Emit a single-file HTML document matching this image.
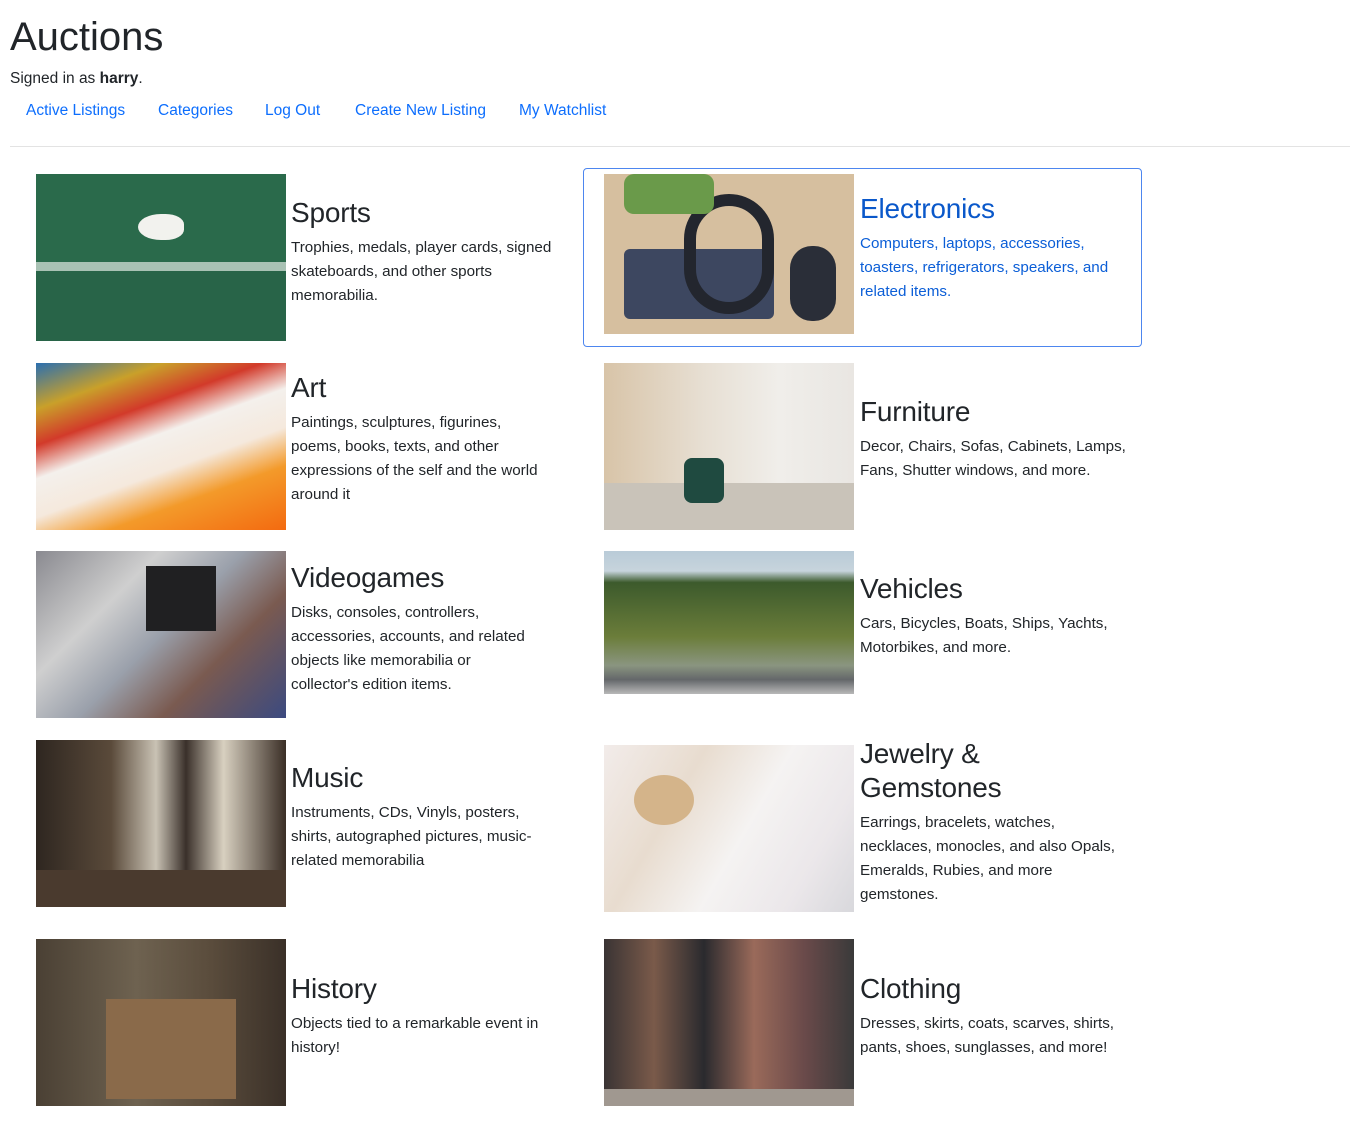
<!DOCTYPE html>
<html><head><meta charset="utf-8"><style>
*{box-sizing:border-box}
body{margin:0;background:#fff;font-family:"Liberation Sans",sans-serif;color:#212529;width:1360px;height:1127px;position:relative;overflow:hidden}
.a{position:absolute}
h1{position:absolute;left:10px;top:13px;margin:0;font-size:40px;font-weight:500;line-height:48px}
.sig{left:10px;top:69px;font-size:15.5px;line-height:20px}
.nav a{position:absolute;top:101px;color:#0d6efd;text-decoration:none;font-size:15.5px;line-height:20px}
hr{position:absolute;left:10px;top:146px;width:1340px;margin:0;border:0;border-top:1px solid #e3e3e3}
.img{position:absolute;width:250px;height:167px}
.t{position:absolute;width:300px}
.t h3{margin:0 0 6px;font-size:28px;font-weight:500;line-height:34px;letter-spacing:-0.2px}
.t p{margin:0;font-size:15.2px;line-height:24px;white-space:nowrap}
.box{left:583px;top:168px;width:559px;height:179px;border:1px solid #4d86ef;border-radius:4px}
.blue h3,.blue p{color:#0b5ed7}
.blue h3{color:#0a58ca}
</style></head><body>
<h1>Auctions</h1>
<div class="a sig">Signed in as <b>harry</b>.</div>
<div class="nav"><a style="left:26px">Active Listings</a><a style="left:158px">Categories</a><a style="left:265px">Log Out</a><a style="left:355px">Create New Listing</a><a style="left:519px">My Watchlist</a></div>
<hr>
<div class="a box"></div>

<div class="img" style="left:36px;top:174px;background:linear-gradient(#2a6a4b 0,#2a6a4b 88px,#a9c2b4 88px,#a9c2b4 97px,#286448 97px)"><div class="a" style="left:102px;top:40px;width:46px;height:26px;background:#f2f2ee;border-radius:50% 40% 40% 50%"></div></div>
<div class="t" style="left:291px;top:196px"><h3>Sports</h3><p>Trophies, medals, player cards, signed<br>skateboards, and other sports<br>memorabilia.</p></div>

<div class="img" style="left:604px;top:174px;height:160px;background:#d6bf9f"><div class="a" style="left:20px;top:75px;width:150px;height:70px;background:#3d4760;border-radius:6px"></div><div class="a" style="left:80px;top:20px;width:90px;height:120px;border:12px solid #23262e;border-radius:45px"></div><div class="a" style="left:20px;top:0;width:90px;height:40px;background:#6a9a4a;border-radius:10px"></div><div class="a" style="left:186px;top:72px;width:46px;height:75px;background:#2a2e38;border-radius:22px"></div></div>
<div class="t blue" style="left:860px;top:192px"><h3>Electronics</h3><p>Computers, laptops, accessories,<br>toasters, refrigerators, speakers, and<br>related items.</p></div>

<div class="img" style="left:36px;top:363px;background:linear-gradient(160deg,#2b6fb0 0,#c9a02a 18%,#d23a2a 32%,#f4f0ec 45%,#f5e9dd 60%,#f39a2a 75%,#f36a10 100%)"></div>
<div class="t" style="left:291px;top:371px"><h3>Art</h3><p>Paintings, sculptures, figurines,<br>poems, books, texts, and other<br>expressions of the self and the world<br>around it</p></div>

<div class="img" style="left:604px;top:363px;background:linear-gradient(90deg,#d8c4a8 0,#e7dfd3 40%,#f0eeea 70%,#e9e6e2 100%)"><div class="a" style="left:0;top:120px;width:250px;height:47px;background:#c9c3b9"></div><div class="a" style="left:80px;top:95px;width:40px;height:45px;background:#1f4a40;border-radius:8px"></div></div>
<div class="t" style="left:860px;top:395px"><h3>Furniture</h3><p>Decor, Chairs, Sofas, Cabinets, Lamps,<br>Fans, Shutter windows, and more.</p></div>

<div class="img" style="left:36px;top:551px;background:linear-gradient(135deg,#8a8a90 0,#cfcfcf 30%,#9aa0ab 50%,#7a5a50 70%,#3b4a80 100%)"><div class="a" style="left:110px;top:15px;width:70px;height:65px;background:#202022"></div></div>
<div class="t" style="left:291px;top:561px"><h3>Videogames</h3><p>Disks, consoles, controllers,<br>accessories, accounts, and related<br>objects like memorabilia or<br>collector's edition items.</p></div>

<div class="img" style="left:604px;top:551px;height:143px;background:linear-gradient(#b9cbd8 0,#c7d4dc 14%,#3c5a2c 22%,#6b7d3a 60%,#8a9580 80%,#64676a 90%,#b8b8b8 100%)"></div>
<div class="t" style="left:860px;top:572px"><h3>Vehicles</h3><p>Cars, Bicycles, Boats, Ships, Yachts,<br>Motorbikes, and more.</p></div>

<div class="img" style="left:36px;top:740px;background:linear-gradient(90deg,#2e2620 0,#5a4a3a 30%,#c9c2b4 48%,#3a302a 60%,#d8d0c0 75%,#3a2e26 100%)"><div class="a" style="left:0;top:130px;width:250px;height:37px;background:#4a3a2e"></div></div>
<div class="t" style="left:291px;top:761px"><h3>Music</h3><p>Instruments, CDs, Vinyls, posters,<br>shirts, autographed pictures, music-<br>related memorabilia</p></div>

<div class="img" style="left:604px;top:745px;background:linear-gradient(120deg,#f2ecea 0,#e8dccf 30%,#f5f3f2 55%,#ebe7ea 80%,#d8d8dc 100%)"><div class="a" style="left:30px;top:30px;width:60px;height:50px;background:#d4b48a;border-radius:50%"></div></div>
<div class="t" style="left:860px;top:737px"><h3>Jewelry &amp;<br>Gemstones</h3><p>Earrings, bracelets, watches,<br>necklaces, monocles, and also Opals,<br>Emeralds, Rubies, and more<br>gemstones.</p></div>

<div class="img" style="left:36px;top:939px;background:linear-gradient(90deg,#4a4034 0,#6e6250 40%,#5a4c3c 70%,#3a3028 100%)"><div class="a" style="left:70px;top:60px;width:130px;height:100px;background:#8a6a4a"></div></div>
<div class="t" style="left:291px;top:972px"><h3>History</h3><p>Objects tied to a remarkable event in<br>history!</p></div>

<div class="img" style="left:604px;top:939px;background:linear-gradient(90deg,#3a3434 0,#7a5a4a 20%,#2a2a2e 40%,#9a6a5a 60%,#6a4a4a 80%,#3a3a3a 100%)"><div class="a" style="left:0;top:150px;width:250px;height:17px;background:#a09890"></div></div>
<div class="t" style="left:860px;top:972px"><h3>Clothing</h3><p>Dresses, skirts, coats, scarves, shirts,<br>pants, shoes, sunglasses, and more!</p></div>
</body></html>
